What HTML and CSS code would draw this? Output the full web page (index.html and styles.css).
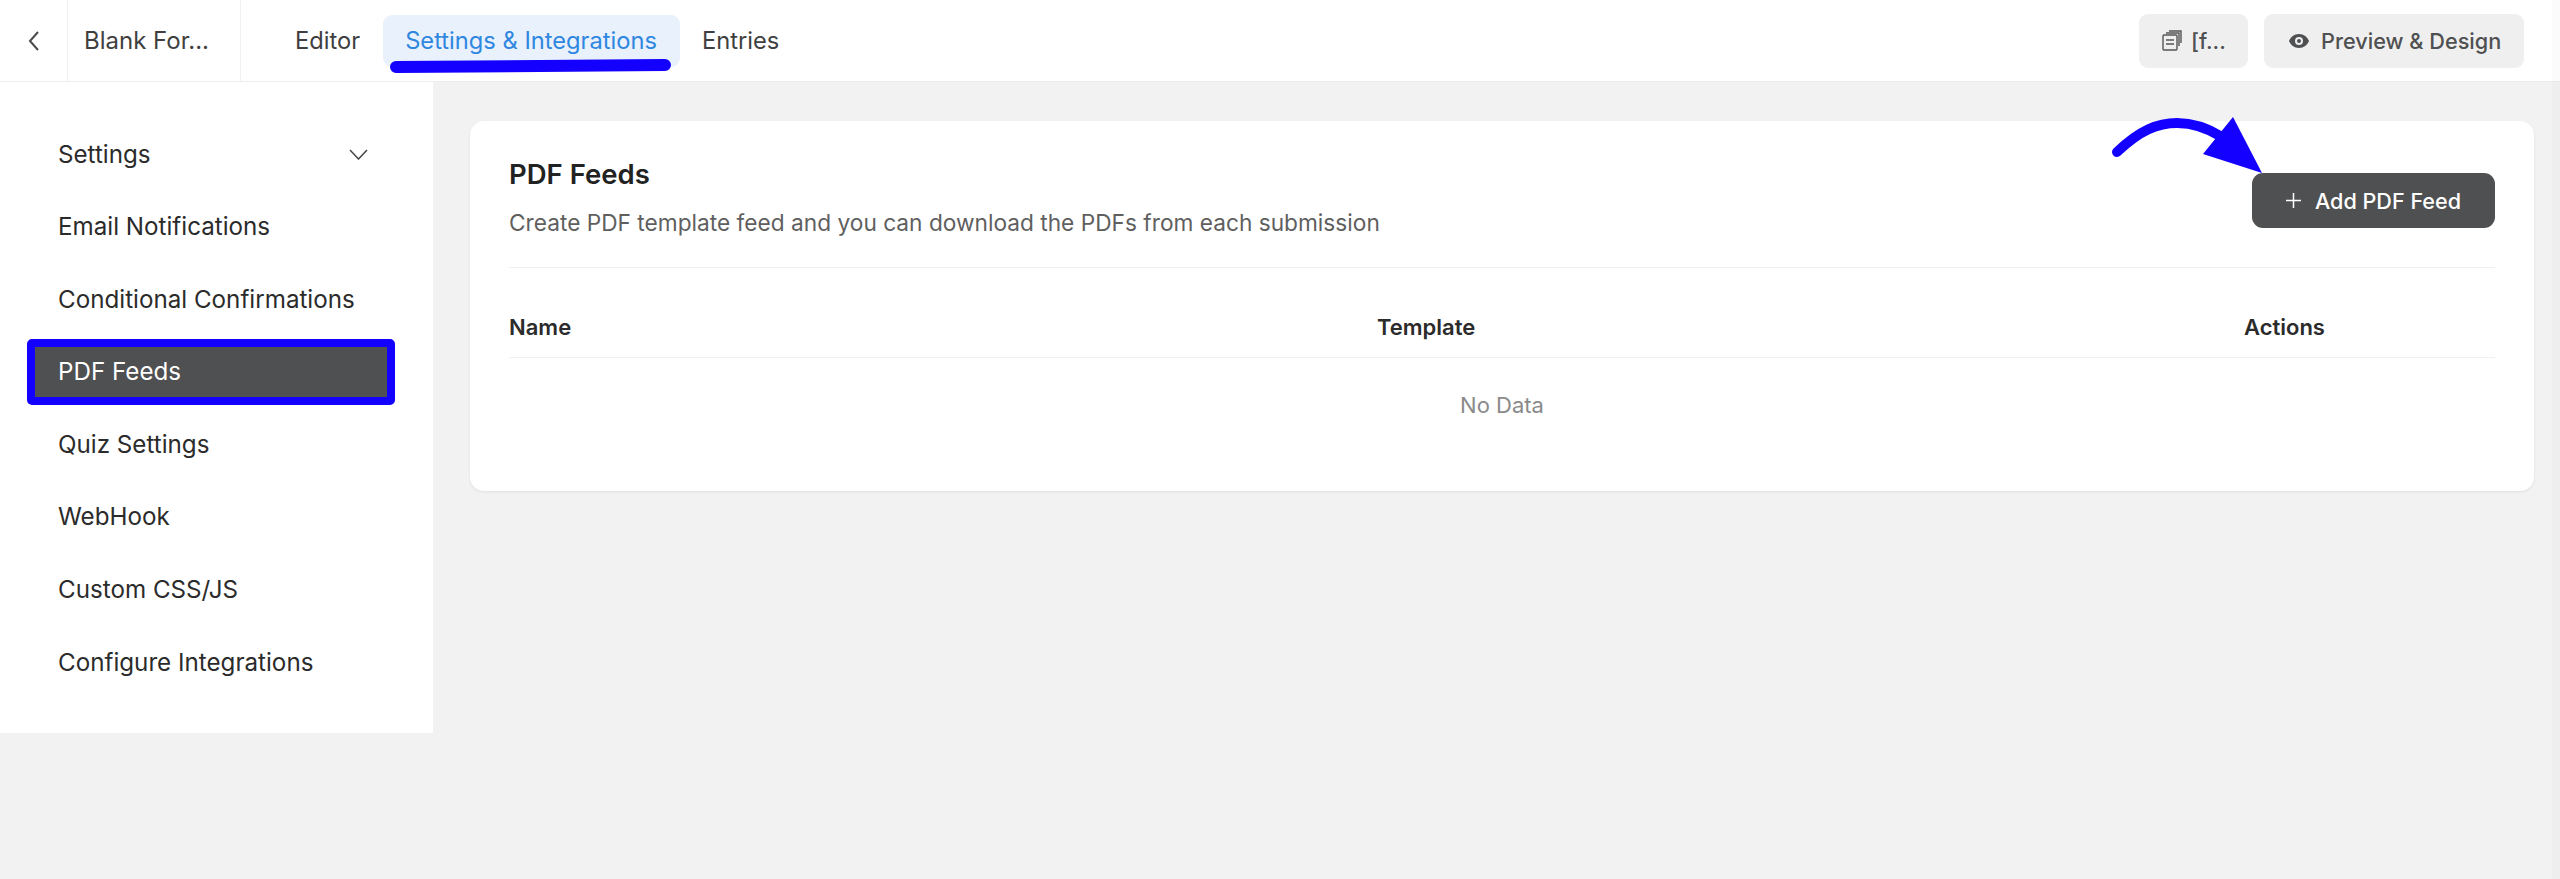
FILE: index.html
```html
<!DOCTYPE html>
<html lang="en">
<head>
<meta charset="UTF-8">
<meta name="viewport" content="width=device-width, initial-scale=1.0">
<title>PDF Feeds</title>
<link rel="stylesheet" href="styles.css">
</head>
<body>

<header class="topbar">
  <a class="back-cell" href="#">
    <svg width="14" height="22" viewBox="0 0 14 22" fill="none" stroke="#4a4a4a" stroke-width="2"><path d="M11 2 L3 11 L11 20"/></svg>
  </a>
  <div class="form-name">Blank For...</div>
  <nav class="tabs">
    <a class="tab" href="#">Editor</a>
    <a class="tab tab-active" href="#">Settings &amp; Integrations<span class="tab-mark"></span></a>
    <a class="tab" href="#">Entries</a>
  </nav>
  <div class="top-actions">
    <button class="grey-btn shortcode-btn">
      <svg width="20" height="21" viewBox="0 0 20 21" fill="none" stroke="#555" stroke-width="1.4"><rect x="1" y="5" width="14" height="15" rx="1"/><path d="M4 3 H17 V16 M7 1 H19 V13"/><path d="M4 10 H12 M4 14 H12"/></svg>
      [f...
    </button>
    <button class="grey-btn preview-btn">
      <svg width="20" height="14" viewBox="0 0 20 14"><path fill="#4f5051" fill-rule="evenodd" d="M10 0 C5 0 1.800 3 0 7 C1.800 11 5 14 10 14 C15 14 18.200 11 20 7 C18.200 3 15 0 10 0 Z M10 3 A4 4 0 1 1 10 11 A4 4 0 1 1 10 3 Z M10 5 A2 2 0 1 0 10 9 A2 2 0 1 0 10 5 Z"/></svg>
      Preview &amp; Design
    </button>
  </div>
</header>

<div class="page">
  <aside class="sidebar">
    <a class="side-item" href="#">Settings
      <svg class="chevron" width="19" height="11" viewBox="0 0 19 11" fill="none" stroke="#444" stroke-width="1.500"><path d="M1 1 L9.500 10 L18 1"/></svg>
    </a>
    <a class="side-item" href="#">Email Notifications</a>
    <a class="side-item" href="#">Conditional Confirmations</a>
    <a class="side-item side-item-active" href="#">PDF Feeds</a>
    <a class="side-item" href="#">Quiz Settings</a>
    <a class="side-item" href="#">WebHook</a>
    <a class="side-item" href="#">Custom CSS/JS</a>
    <a class="side-item" href="#">Configure Integrations</a>
  </aside>

  <main class="content">
    <section class="card">
      <div class="card-head">
        <div>
          <h1>PDF Feeds</h1>
          <p>Create PDF template feed and you can download the PDFs from each submission</p>
        </div>
        <button class="add-btn">
          <svg class="plus" width="15" height="15" viewBox="0 0 15 15" stroke="#ffffff" stroke-width="1.500"><path d="M7.500 0 V15 M0 7.500 H15"/></svg>
          Add PDF Feed
        </button>
        <svg class="arrow" width="160" height="70" viewBox="0 0 160 70">
          <path d="M7 42 C30 20 48 13 67 13 C82 13 96 17 112 27" fill="none" stroke="#1400ff" stroke-width="10" stroke-linecap="round"/>
          <path d="M123 7 L152 63 L93 44 Z" fill="#1400ff"/>
        </svg>
      </div>
      <div class="table-row table-head">
        <span>Name</span>
        <span>Template</span>
        <span>Actions</span>
      </div>
      <div class="no-data">No Data</div>
    </section>
  </main>
</div>

</body>
</html>
```

FILE: styles.css
```css
/* page */
html, body {
  margin: 0;
  height: 100%;
}

body {
  background-color: #f2f2f2;
  font-family: Inter, "Liberation Sans", sans-serif;
  font-size: 24px;
  color: #2b2b2b;
  overflow: hidden;
}

/* faint scrollbar track on the right edge */
body::after {
  content: "";
  position: fixed;
  top: 0;
  right: 0;
  bottom: 0;
  width: 8px;
  background-color: rgba(0, 0, 0, 0.015);
}

a {
  color: inherit;
  text-decoration: none;
}

button {
  font-family: inherit;
  border: none;
  cursor: pointer;
}

/* top bar */
.topbar {
  display: flex;
  align-items: center;
  height: 81px;
  background-color: #ffffff;
  border-bottom: 1px solid #ededed;
}

.back-cell {
  display: flex;
  align-items: center;
  justify-content: center;
  width: 68px;
  height: 100%;
  border-right: 1px solid #f1f1f1;
  box-sizing: border-box;
}

.form-name {
  display: flex;
  align-items: center;
  width: 173px;
  height: 100%;
  padding-left: 16px;
  border-right: 1px solid #f1f1f1;
  box-sizing: border-box;
  color: #3f3f3f;
}

.tabs {
  display: flex;
  align-items: center;
  margin-left: 31.5px;
}

.tab {
  position: relative;
  display: flex;
  align-items: center;
  height: 52px;
  padding: 0 22.5px;
  border-radius: 9px;
  font-size: 23.7px;
  color: #3f3f3f;
}

.tab-active {
  background-color: #e9f1fd;
  color: #2f87e0;
}

.tab-mark {
  position: absolute;
  left: 7px;
  top: 45px;
  width: 281px;
  height: 12px;
  border-radius: 6px;
  background-color: #1400ff;
  transform: rotate(-0.4deg);
}

.top-actions {
  display: flex;
  align-items: center;
  column-gap: 16px;
  margin-left: auto;
  margin-right: 36px;
}

.grey-btn {
  display: flex;
  align-items: center;
  height: 54px;
  border-radius: 9px;
  background-color: #efefef;
  color: #4f5051;
  font-size: 21.7px;
  font-weight: 500;
}

.shortcode-btn {
  width: 109px;
  padding: 0 0 0 23px;
  column-gap: 9px;
}

.preview-btn {
  width: 260px;
  padding: 0 0 0 25px;
  column-gap: 12px;
}

/* layout below the bar */
.page {
  display: flex;
  align-items: flex-start;
}

.sidebar {
  display: flex;
  flex-direction: column;
  row-gap: 6.6px;
  width: 432.5px;
  height: 651px;
  padding: 39px 0 0 27px;
  background-color: #ffffff;
  box-sizing: border-box;
}

.side-item {
  display: flex;
  align-items: center;
  justify-content: space-between;
  width: 368px;
  height: 66px;
  padding: 0 27px 0 31px;
  box-sizing: border-box;
  font-size: 24.2px;
  color: #2b2b2b;
}

.side-item-active {
  background-color: #4f5051;
  border: 8px solid #1400ff;
  border-radius: 5px;
  padding-left: 23px;
  color: #ffffff;
}

/* card */
.content {
  flex: 1;
  padding: 39px 26px 0 37.5px;
}

.card {
  height: 370px;
  background-color: #ffffff;
  border-radius: 14px;
  padding: 0 39px 0 39px;
  box-shadow: 0 1px 3px rgba(0, 0, 0, 0.08);
  box-sizing: border-box;
}

.card-head {
  position: relative;
  display: flex;
  justify-content: space-between;
  align-items: flex-start;
  height: 146px;
  border-bottom: 1px solid #f1f1f1;
}

h1 {
  margin: 33px 0 0;
  font-size: 27.5px;
  line-height: 40px;
  font-weight: 600;
  color: #222222;
}

.card-head p {
  margin: 11px 0 0;
  font-size: 22.7px;
  line-height: 36px;
  color: #5f5f5f;
}

.add-btn {
  display: flex;
  align-items: center;
  justify-content: center;
  column-gap: 14px;
  width: 243px;
  height: 55px;
  margin-top: 52px;
  border-radius: 11px;
  background-color: #4f5051;
  color: #ffffff;
  font-size: 21.6px;
  font-weight: 500;
}

.arrow {
  position: absolute;
  right: 225px;
  top: -11px;
}

.table-row {
  display: grid;
  grid-template-columns: 868px 867px 1fr;
}

.table-head {
  align-items: center;
  height: 90px;
  padding-top: 28px;
  box-sizing: border-box;
  border-bottom: 1px solid #f1f1f1;
  font-weight: 600;
  font-size: 22px;
  color: #2b2b2b;
}

.no-data {
  margin-top: 29px;
  text-align: center;
  line-height: 36px;
  font-size: 22px;
  color: #8a8a8a;
}
```
